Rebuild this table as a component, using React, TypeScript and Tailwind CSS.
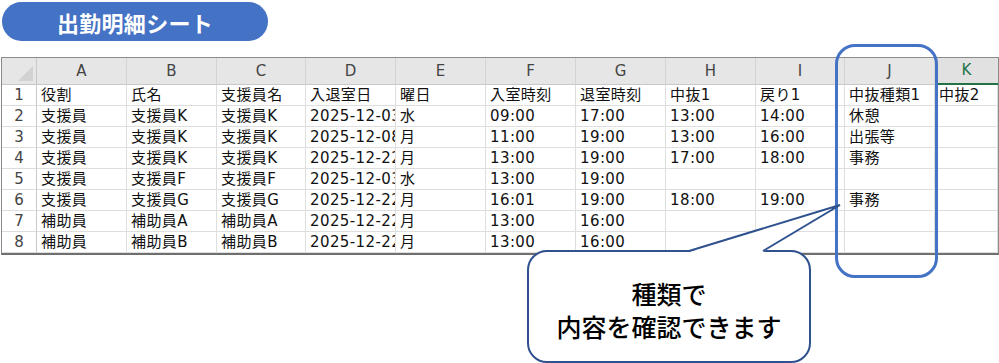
import React from "react";

const cols = ["A", "B", "C", "D", "E", "F", "G", "H", "I", "J", "K"];

const rows: string[][] = [
  ["役割", "氏名", "支援員名", "入退室日", "曜日", "入室時刻", "退室時刻", "中抜1", "戻り1", "中抜種類1", "中抜2"],
  ["支援員", "支援員K", "支援員K", "2025-12-03", "水", "09:00", "17:00", "13:00", "14:00", "休憩", ""],
  ["支援員", "支援員K", "支援員K", "2025-12-08", "月", "11:00", "19:00", "13:00", "16:00", "出張等", ""],
  ["支援員", "支援員K", "支援員K", "2025-12-22", "月", "13:00", "19:00", "17:00", "18:00", "事務", ""],
  ["支援員", "支援員F", "支援員F", "2025-12-03", "水", "13:00", "19:00", "", "", "", ""],
  ["支援員", "支援員G", "支援員G", "2025-12-22", "月", "16:01", "19:00", "18:00", "19:00", "事務", ""],
  ["補助員", "補助員A", "補助員A", "2025-12-22", "月", "13:00", "16:00", "", "", "", ""],
  ["補助員", "補助員B", "補助員B", "2025-12-22", "月", "13:00", "16:00", "", "", "", ""],
];

const font = { fontFamily: '"DejaVu Sans","Noto Sans CJK JP",sans-serif' };

export default function App() {
  return (
    <div className="relative w-[999px] h-[363px] bg-white overflow-hidden" style={font}>
      <div className="pt-[2px] pl-[2px]">
        <div
          className="w-[266px] h-[39px] rounded-full bg-[#4472C4] flex items-center justify-center text-white text-[22px] font-bold leading-none tracking-[0.3px]"
          style={{ fontFamily: '"Noto Sans CJK JP",sans-serif' }}
        >
          出勤明細シート
        </div>
      </div>

      <div className="mt-[16px] ml-[1px] w-[998px] border-t border-l border-r border-[#8a8a8a] border-b-2 border-b-[#6f6f6f]">
        <div className="grid grid-cols-[35px_90px_90px_89px_90px_90px_90px_90px_90px_89px_90px_1fr] text-[15px] text-black">
          {/* header row */}
          <div className="h-[27px] bg-[#e6e6e6] border-r border-b border-[#c8c8c8] relative">
            <div className="absolute right-[3px] bottom-[3px] w-0 h-0 border-l-[15px] border-l-transparent border-b-[15px] border-b-[#d2d2d2]" />
          </div>
          {cols.map((c) => (
            <div
              key={c}
              className={
                c === "K"
                  ? "h-[27px] bg-[#e1e1e1] border-b-2 border-[#217346] flex items-center justify-center text-[#217346] text-[15px]"
                  : "h-[27px] bg-[#e6e6e6] border-r border-b border-[#d4d4d4] border-b-[#c8c8c8] flex items-center justify-center text-[#444] text-[15px]"
              }
              style={{ fontFamily: '"DejaVu Sans",sans-serif' }}
            >
              {c}
            </div>
          ))}

          {rows.map((r, i) => (
            <React.Fragment key={i}>
              <div className="h-[21px] border-r border-b border-[#c8c8c8] border-b-[#dcdcdc] flex items-center justify-center text-[#444] text-[15px] leading-none">
                {i + 1}
              </div>
              {r.map((v, j) => (
                <div
                  key={j}
                  className="h-[21px] border-r border-b border-[#dedede] pl-[4px] overflow-hidden whitespace-nowrap leading-[20px] text-[15px] tracking-[0.4px] text-[#111]"
                >
                  {v}
                </div>
              ))}
            </React.Fragment>
          ))}
        </div>
      </div>

      {/* column J highlight */}
      <div className="absolute left-[835px] top-[44px] w-[103px] h-[234px] border-[3px] border-[#4472C4] rounded-[20px]" />

      {/* callout */}
      <div
        className="absolute left-[527px] top-[250px] w-[284px] h-[113px] border-2 border-[#2F528F] rounded-[20px] bg-white flex flex-col items-center justify-center pt-[6px] text-[25px] leading-[33px] text-black font-medium"
        style={{ fontFamily: '"Noto Sans CJK JP",sans-serif' }}
      >
        <div>種類で</div>
        <div>内容を確認できます</div>
      </div>
      <svg className="absolute left-0 top-0" width="999" height="363" viewBox="0 0 999 363">
        <polygon points="689,252 840,205 763,252" fill="white" />
        <polyline
          points="689,251 840,205 763,251"
          fill="none"
          stroke="#2F528F"
          strokeWidth="2"
          strokeLinejoin="miter"
        />
      </svg>
    </div>
  );
}
